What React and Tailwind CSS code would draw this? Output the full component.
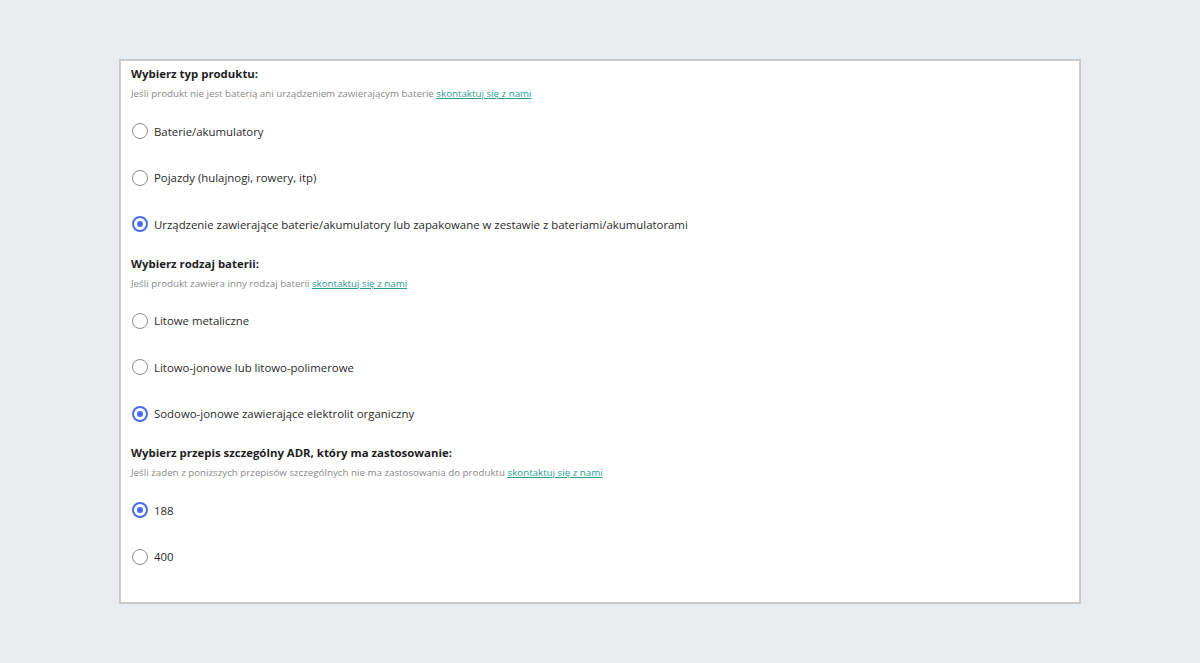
import React from "react";

const sections = [
  {
    title: "Wybierz typ produktu:",
    sub: "Jeśli produkt nie jest baterią ani urządzeniem zawierającym baterie",
    options: [
      "Baterie/akumulatory",
      "Pojazdy (hulajnogi, rowery, itp)",
      "Urządzenie zawierające baterie/akumulatory lub zapakowane w zestawie z bateriami/akumulatorami",
    ],
    checked: 2,
  },
  {
    title: "Wybierz rodzaj baterii:",
    sub: "Jeśli produkt zawiera inny rodzaj baterii",
    options: [
      "Litowe metaliczne",
      "Litowo-jonowe lub litowo-polimerowe",
      "Sodowo-jonowe zawierające elektrolit organiczny",
    ],
    checked: 2,
  },
  {
    title: "Wybierz przepis szczególny ADR, który ma zastosowanie:",
    sub: "Jeśli żaden z poniższych przepisów szczególnych nie ma zastosowania do produktu",
    options: ["188", "400"],
    checked: 0,
  },
];

function Radio({ checked }) {
  return checked ? (
    <span className="flex h-4 w-4 shrink-0 items-center justify-center rounded-full border-2 border-[#4a6ce8] bg-white">
      <span className="h-[6px] w-[6px] rounded-full bg-[#4a6ce8]" />
    </span>
  ) : (
    <span className="h-4 w-4 shrink-0 rounded-full border border-[#8c8c8c] bg-white" />
  );
}

export default function App() {
  return (
    <div
      className="flex min-h-[663px] w-full justify-center bg-[#e9edf0] pt-[59px]"
      style={{ fontFamily: '"Open Sans", "Noto Sans", sans-serif' }}
    >
      <div className="h-[545px] w-[962px] border-2 border-[#c9c9c9] bg-white px-[10px] pt-[4px]">
        {sections.map((s, si) => (
          <div key={si} className={si > 0 ? "mt-[7px]" : ""}>
            <div className="h-[18px] text-[11.4px] font-bold leading-[18px] text-[#1e1e1e]">{s.title}</div>
            <div className="mt-[4px] h-[14px] text-[9.75px] leading-[14px] text-[#8a8a8a]">
              {s.sub}{" "}
              <span className="text-[#2a9d8f] underline">skontaktuj się z nami</span>
            </div>
            <div className="mt-[7px]">
              {s.options.map((o, oi) => (
                <div key={oi} className="flex h-[46.5px] items-center gap-[6px] pl-[1px]">
                  <Radio checked={oi === s.checked} />
                  <span className="text-[11.4px] text-[#2a2a2a]">{o}</span>
                </div>
              ))}
            </div>
          </div>
        ))}
      </div>
    </div>
  );
}
